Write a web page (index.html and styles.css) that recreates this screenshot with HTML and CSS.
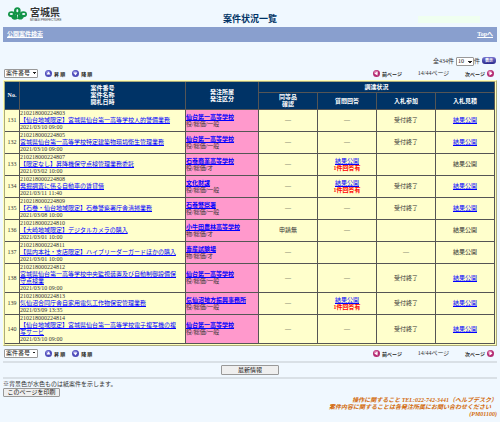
FILE: index.html
```
<!DOCTYPE html>
<html lang="ja">
<head>
<meta charset="utf-8">
<title>案件状況一覧</title>
<link rel="stylesheet" href="styles.css">
</head>
<body>
<svg class="defs" aria-hidden="true">
  <symbol id="up" viewBox="0 0 14 14"><circle cx="7" cy="7" r="7" fill="#4c4ab8"/><circle cx="6" cy="5" r="4" fill="#8583dc"/><path d="M7 3l4 6H3z" fill="#fff"/></symbol>
  <symbol id="down" viewBox="0 0 14 14"><circle cx="7" cy="7" r="7" fill="#4c4ab8"/><circle cx="6" cy="5" r="4" fill="#8583dc"/><path d="M7 11l4-6H3z" fill="#fff"/></symbol>
  <symbol id="prev" viewBox="0 0 14 14"><circle cx="7" cy="7" r="7" fill="#b42c72"/><circle cx="6" cy="5" r="4" fill="#dc78aa"/><path d="M3 7l6-4v8z" fill="#fff"/></symbol>
  <symbol id="next" viewBox="0 0 14 14"><circle cx="7" cy="7" r="7" fill="#b42c72"/><circle cx="6" cy="5" r="4" fill="#dc78aa"/><path d="M11 7L5 3v8z" fill="#fff"/></symbol>
</svg>
<header class="head">
  <div class="logo">
    <svg class="mark" viewBox="0 0 57 40" aria-hidden="true">
      <g fill="#129447">
        <ellipse cx="28" cy="11" rx="10" ry="11"/>
        <ellipse cx="11" cy="21" rx="11" ry="9"/>
        <ellipse cx="46" cy="21" rx="11" ry="9"/>
        <path d="M24 16h9c1 7 5 9 14 12-1 7-9 12-18 6-9 6-18 2-19-6 9-2 13-5 14-12z"/>
      </g>
      <g fill="#f0f8ff">
        <ellipse cx="28" cy="10" rx="3" ry="5"/>
        <ellipse cx="10" cy="20" rx="5" ry="3"/>
        <ellipse cx="47" cy="20" rx="5" ry="3"/>
        <path d="M27 22h3l-1 10h-1z"/>
      </g>
    </svg>
    <div><b class="pref">宮城県</b><span class="roman">MIYAGI PREFECTURE</span></div>
  </div>
  <h1>案件状況一覧</h1>
  <div class="clock"></div>
</header>
<nav class="bar"><a href="#">公開案件検索</a><a href="#">Topへ</a></nav>
<main>
  <div class="count">
    <label for="size">全434件</label>
    <select id="size" class="size"><option>10</option></select><span>件</span>
    <button class="show">表示</button>
  </div>
  <div class="tools">
    <select class="sort" aria-label="並び順"><option>案件番号</option></select>
    <a href="#" class="order"><svg><use href="#up"/></svg>昇 順</a>
    <a href="#" class="order"><svg><use href="#down"/></svg>降 順</a>
    <div class="pager">
      <a href="#"><svg><use href="#prev"/></svg>前ページ</a><span>14/44ページ</span><a href="#">次ページ<svg><use href="#next"/></svg></a>
    </div>
  </div>
  <table>
    <colgroup><col class="c-no"><col class="c-case"><col class="c-dept"><col><col><col><col></colgroup>
    <thead>
      <tr><th rowspan="2">No.</th><th rowspan="2">案件番号<br>案件名称<br>開札日時</th><th rowspan="2">発注所属<br>発注区分</th><th colspan="4" class="group">調達状況</th></tr>
      <tr><th>同等品<br>確認</th><th>質問回答</th><th>入札参加</th><th>入札見積</th></tr>
    </thead>
    <tbody>
      <tr><td>131</td><td>210218000224803<br><a href="#">【仙台地域限定】宮城県仙台第一高等学校人的警備業務</a><br>2021/03/10 09:00</td><td><a href="#">仙台第一高等学校</a><br>役/総価/一般</td><td>―</td><td>―</td><td>受付終了</td><td><a href="#">結果公開</a></td></tr>
      <tr><td>132</td><td>210218000224805<br><a href="#">宮城県仙台第一高等学校特定建築物環境衛生管理業務</a><br>2021/03/10 09:00</td><td><a href="#">仙台第一高等学校</a><br>役/総価/一般</td><td>―</td><td>―</td><td>受付終了</td><td><a href="#">結果公開</a></td></tr>
      <tr><td>133</td><td>210218000224807<br><a href="#">【限定なし】昇降機保守点検管理業務委託</a><br>2021/03/02 10:00</td><td><a href="#">石巻商業高等学校</a><br>役/総価/オ</td><td>―</td><td><a href="#">結果公開</a><br><b>1件回答有</b></td><td></td><td>結果公開</td></tr>
      <tr><td>134</td><td>210218000224808<br><a href="#">発掘調査に係る自動車の賃貸借</a><br>2021/03/11 11:40</td><td><a href="#">文化財課</a><br>役/総価/一般</td><td>―</td><td><a href="#">結果公開</a><br><b>1件回答有</b></td><td>受付終了</td><td><a href="#">結果公開</a></td></tr>
      <tr><td>135</td><td>210218000224809<br><a href="#">【石巻・仙台地域限定】石巻警察署庁舎清掃業務</a><br>2021/03/08 10:00</td><td><a href="#">石巻警察署</a><br>役/総価/一般</td><td>―</td><td>―</td><td>受付終了</td><td><a href="#">結果公開</a></td></tr>
      <tr><td>136</td><td>210218000224810<br><a href="#">【大崎地域限定】デジタルカメラの購入</a><br>2021/03/01 10:00</td><td><a href="#">小牛田農林高等学校</a><br>物/総価/オ</td><td>申請無</td><td>―</td><td></td><td>結果公開</td></tr>
      <tr><td>137</td><td>210218000224811<br><a href="#">【県内本社・支店限定】ハイブリーダーガードほかの購入</a><br>2021/03/01 10:00</td><td><a href="#">畜産試験場</a><br>物/総価/オ</td><td>―</td><td></td><td>―</td><td>結果公開</td></tr>
      <tr><td>138</td><td>210218000224812<br><a href="#">宮城県仙台第一高等学校中央監視装置及び自動制御設備保守点検業</a><br>2021/03/10 09:00</td><td><a href="#">仙台第一高等学校</a><br>役/総価/一般</td><td>―</td><td>―</td><td>受付終了</td><td><a href="#">結果公開</a></td></tr>
      <tr><td>139</td><td>210218000224813<br><a href="#">気仙沼合同庁舎自家用電気工作物保安管理業務</a><br>2021/03/09 13:35</td><td><a href="#">気仙沼地方振興事務所</a><br>役/総価/一般</td><td>―</td><td><a href="#">結果公開</a><br><b>1件回答有</b></td><td>受付終了</td><td><a href="#">結果公開</a></td></tr>
      <tr><td>140</td><td>210218000224814<br><a href="#">【仙台地域限定】宮城県仙台第一高等学校電子複写機の複写サービ</a><br>2021/03/10 09:00</td><td><a href="#">仙台第一高等学校</a><br>役/総価/一般</td><td>―</td><td>―</td><td>受付終了</td><td><a href="#">結果公開</a></td></tr>
    </tbody>
  </table>
  <div class="tools">
    <select class="sort" aria-label="並び順"><option>案件番号</option></select>
    <a href="#" class="order"><svg><use href="#up"/></svg>昇 順</a>
    <a href="#" class="order"><svg><use href="#down"/></svg>降 順</a>
    <div class="pager">
      <a href="#"><svg><use href="#prev"/></svg>前ページ</a><span>14/44ページ</span><a href="#">次ページ<svg><use href="#next"/></svg></a>
    </div>
  </div>
  <div class="latest"><button>最新情報</button></div>
  <p class="note">※背景色が水色ものは紙案件を示します。</p>
  <button class="print">このページを印刷</button>
</main>
<footer>
  <p>操作に関すること TEL:022-742-3441（ヘルプデスク）</p>
  <p class="inset">案件内容に関することは各発注所属にお問い合わせください</p>
  <p>(PM01100)</p>
</footer>
</body>
</html>
```

FILE: styles.css
```
* { box-sizing: border-box; }
body {
  margin: 0;
  padding: 0 3px;
  background: #f0f8ff;
  color: #333;
  font: 6px/7px "Liberation Serif", "Noto Sans CJK JP", serif;
}
p { margin: 0; }
.defs { display: none; }

.head {
  display: grid;
  grid-template-columns: 1fr auto 1fr;
  height: 27px;
}
.logo { display: flex; gap: 3px; padding: 6px 0 0 5px; }
.mark { width: 19px; height: 14px; margin-top: 1px; }
.pref { display: block; font: bold 10px/12px "Noto Sans CJK JP", sans-serif; color: #333; }
.roman { display: block; padding-top: 1px; font: 3px/3px "Liberation Sans", sans-serif; color: #444; }
.head h1 {
  margin: 0;
  padding-top: 13px;
  font: bold 9px/12px "Noto Sans CJK JP", sans-serif;
  color: #036;
}
.clock {
  justify-self: end;
  width: 62px;
  height: 7px;
  margin: 16px 17px 0 0;
  background: #f0fff0;
}

.bar {
  display: flex;
  justify-content: space-between;
  align-items: center;
  height: 15px;
  padding: 0 4px;
  background: #899fce;
  font-weight: bold;
}
.bar a { color: #fff; }

.count {
  display: flex;
  justify-content: flex-end;
  align-items: center;
  height: 9px;
  margin-top: 15px;
}
.count label { margin-right: 2px; }
select {
  appearance: none;
  height: 9px;
  padding: 0 1px;
  border: 1px solid #999;
  border-radius: 1px;
  background:
    linear-gradient(45deg, transparent 50%, #222 50%) right 3px center / 2px 2px no-repeat,
    linear-gradient(-45deg, transparent 50%, #222 50%) right 1px center / 2px 2px no-repeat,
    #fff;
  color: #111;
  font: inherit;
}
.size { width: 18px; }
.sort { width: 34px; }
.show {
  width: 14px;
  height: 7px;
  margin: 0 1px 3px 2px;
  padding: 0;
  border: 0;
  border-radius: 3px;
  background: linear-gradient(#7775d0, #2b2a8c);
  color: #fff;
  font: bold 4px/6px "Noto Sans CJK JP", sans-serif;
}

.tools {
  display: flex;
  align-items: center;
  height: 14px;
  padding: 0 3px 0 1px;
}
.tools a {
  display: flex;
  align-items: center;
  gap: 2px;
  color: #222;
  font: bold 5px/7px "Noto Sans CJK JP", sans-serif;
  text-decoration: none;
}
.tools svg { width: 7px; height: 7px; }
.order { margin-left: 7px; }
.pager {
  display: flex;
  justify-content: space-between;
  width: 121px;
  margin-left: auto;
}

table {
  width: 100%;
  border: 2px ridge #ffffb8;
  border-collapse: separate;
  border-spacing: 0;
  background: #ffc;
  table-layout: fixed;
}
.c-no { width: 15px; }
.c-case { width: 166px; }
.c-dept { width: 73px; }
th, td {
  padding: 0;
  border: solid #555;
  border-width: 0 1px 1px 0;
  text-align: center;
}
th { height: 17px; background: #036; color: #fff; }
th.group { height: 11px; }
td { height: 22px; }
td:nth-child(2) { padding-right: 6px; text-align: left; }
td:nth-child(3) { background: #f9c; text-align: left; }
td:nth-child(3) a { font-weight: bold; }
td a { color: #00f; }
td b { color: #f00; }

button {
  padding: 0;
  border: 1px solid #999;
  border-radius: 1px;
  background: #efefef;
  color: #111;
  font: inherit;
}
.latest {
  display: flex;
  justify-content: center;
  margin-top: 1px;
  padding: 2px 0;
  border: solid #d9e0e6;
  border-width: 2px 0;
}
.latest button { width: 58px; height: 10px; }
.note { margin-top: 2px; }
.print { display: block; width: 57px; height: 9px; }

footer {
  color: #d2690a;
  font-weight: bold;
  font-style: italic;
  text-align: right;
}
.inset { padding-right: 6px; }
```
